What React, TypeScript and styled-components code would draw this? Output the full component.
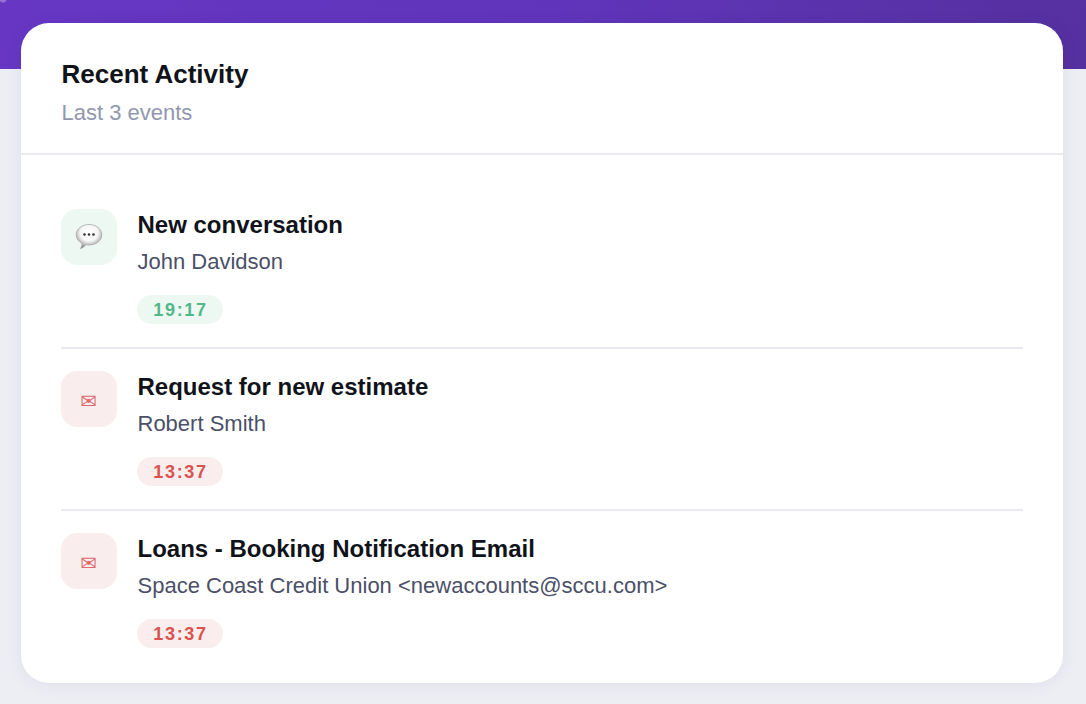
import React from "react";
import styled, { createGlobalStyle } from "styled-components";

const Global = createGlobalStyle`
  html, body { margin: 0; padding: 0; height: 100%; }
  body { font-family: "Liberation Sans", Arial, sans-serif; -webkit-font-smoothing: antialiased; }
`;

const Page = styled.div`
  width: 1086px;
  height: 704px;
  box-sizing: border-box;
  padding: 23px 23px 21px 21px;
  overflow: hidden;
  background:
    radial-gradient(circle at 3px -1px, rgba(255,255,255,.3) 0, rgba(255,255,255,.3) 3px, transparent 4px) no-repeat,
    linear-gradient(100deg, #6737c4 0%, #6035bb 50%, #55309f 100%) 0 0 / 100% 69px no-repeat,
    #edeef4;
`;

const Card = styled.main`
  height: 660px;
  box-sizing: border-box;
  background: #fff;
  border-radius: 28px;
  box-shadow: 0 2px 18px rgba(30, 35, 70, 0.06);
  display: flex;
  flex-direction: column;
`;

const CardHeader = styled.header`
  height: 132px;
  box-sizing: border-box;
  padding: 36px 41px 0 40.5px;
  border-bottom: 2px solid #e9eaee;
`;

const Title = styled.h1`
  margin: 0;
  font-size: 26px;
  line-height: 30px;
  font-weight: 700;
  color: #11131a;
`;

const Subtitle = styled.p`
  margin: 11px 0 0;
  font-size: 22px;
  line-height: 26px;
  color: #9197ae;
`;

const List = styled.ul`
  list-style: none;
  margin: 0;
  padding: 31px 40px 0;
`;

const Row = styled.li`
  display: flex;
  gap: 20.5px;
  height: 162px;
  box-sizing: border-box;
  padding-top: 22px;
  &:first-child { height: 163px; padding-top: 23px; }
  &:not(:last-child) { border-bottom: 2px solid #e9eaee; }
`;

const IconTile = styled.div<{ $tone: string }>`
  flex: none;
  width: 56px;
  height: 56px;
  border-radius: 16px;
  background: ${(p) => p.$tone};
  display: flex;
  align-items: center;
  justify-content: center;
`;

const Envelope = styled.span`
  font-family: "DejaVu Sans", sans-serif;
  font-size: 20px;
  line-height: 1;
  color: #e0696b;
  padding-top: 3px;
`;

const Body = styled.div`
  margin-top: 1px;
  display: flex;
  flex-direction: column;
  align-items: flex-start;
`;

const ItemTitle = styled.div`
  font-size: 24px;
  line-height: 30px;
  font-weight: 700;
  color: #11131a;
`;

const Detail = styled.div`
  margin-top: 9px;
  font-size: 22px;
  line-height: 26px;
  color: #4b4f68;
`;

const Pill = styled.span<{ $bg: string; $fg: string }>`
  margin-top: 20px;
  margin-left: -0.5px;
  width: 86px;
  height: 29px;
  box-sizing: border-box;
  padding: 1.5px 0 0 1px;
  border-radius: 15px;
  background: ${(p) => p.$bg};
  color: ${(p) => p.$fg};
  display: flex;
  align-items: center;
  justify-content: center;
  font-size: 18px;
  font-weight: 700;
  letter-spacing: 1.7px;
`;

const Bubble = () => (
  <svg width="28" height="28" viewBox="0 0 28 28" aria-hidden="true">
    <defs>
      <radialGradient id="b" cx="50%" cy="35%" r="68%">
        <stop offset="0%" stopColor="#ffffff" />
        <stop offset="50%" stopColor="#f6f6f6" />
        <stop offset="100%" stopColor="#7f7f7f" />
      </radialGradient>
    </defs>
    <path
      d="M14 1.500c7 0 12.800 4.400 12.800 10.300S21 22 14 22c-1 0-2 0-2.900-.3-1.400 1.600-3.300 3.400-5.600 3.900 1-1.500 1.500-3.400 1.500-5.300C3.500 18.700 1.200 15.500 1.200 11.800 1.200 5.900 7 1.500 14 1.500z"
      fill="url(#b)"
      stroke="#a0a0a0"
      strokeWidth="0.7"
    />
    <circle cx="9.500" cy="11.500" r="1.300" fill="#333" />
    <circle cx="14" cy="11.500" r="1.300" fill="#333" />
    <circle cx="18.500" cy="11.500" r="1.300" fill="#333" />
  </svg>
);

const GREEN = { tile: "#eef8f3", fg: "#52b788" };
const RED = { tile: "#f9eeed", fg: "#d9534f" };

const events = [
  { title: "New conversation", detail: "John Davidson", time: "19:17", tone: GREEN, chat: true },
  { title: "Request for new estimate", detail: "Robert Smith", time: "13:37", tone: RED, chat: false },
  { title: "Loans - Booking Notification Email", detail: "Space Coast Credit Union <newaccounts@sccu.com>", time: "13:37", tone: RED, chat: false },
];

export default function App() {
  return (
    <>
      <Global />
      <Page>
        <Card>
          <CardHeader>
            <Title>Recent Activity</Title>
            <Subtitle>Last 3 events</Subtitle>
          </CardHeader>
          <List>
            {events.map((e) => (
              <Row key={e.title}>
                <IconTile $tone={e.tone.tile}>
                  {e.chat ? <Bubble /> : <Envelope>✉</Envelope>}
                </IconTile>
                <Body>
                  <ItemTitle>{e.title}</ItemTitle>
                  <Detail>{e.detail}</Detail>
                  <Pill $bg={e.tone.tile} $fg={e.tone.fg}>{e.time}</Pill>
                </Body>
              </Row>
            ))}
          </List>
        </Card>
      </Page>
    </>
  );
}
